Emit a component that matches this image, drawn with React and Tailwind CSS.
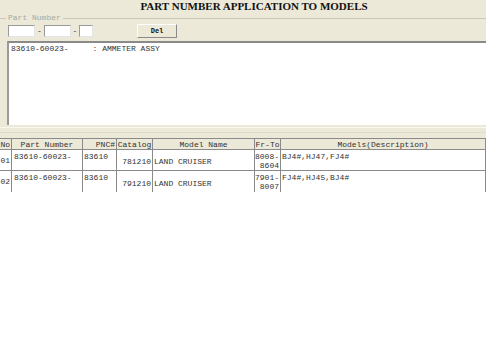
import React from 'react';

const mono = { fontFamily: '"Liberation Mono", "Courier New", monospace' };

const rows = [
  { no: '01', part: '83610-60023-', pnc: '83610', catalog: '781210', model: 'LAND CRUISER', fr: '8008-', to: '8604', desc: 'BJ4#,HJ47,FJ4#' },
  { no: '02', part: '83610-60023-', pnc: '83610', catalog: '791210', model: 'LAND CRUISER', fr: '7901-', to: '8007', desc: 'FJ4#,HJ45,BJ4#' },
];

const cols = 'grid grid-cols-[12px_71px_34px_36px_102px_26px_205px]';

const App = () => {
  return (
    <div className="w-[486px] h-[360px] bg-white overflow-hidden text-[#333]" style={mono}>
      {/* top panel */}
      <div className="bg-[#ece9d8]">
        <div className="h-[13px] flex justify-center">
          <h1
            className="text-[11px] leading-[13px] font-bold text-[#111] pl-[22px]"
            style={{ fontFamily: '"Liberation Serif", "Times New Roman", serif' }}
          >
            PART NUMBER APPLICATION TO MODELS
          </h1>
        </div>

        {/* group box caption */}
        <div className="flex items-center h-[10px]">
          <div className="w-[6px] border-t border-[#c9c6b8]" />
          <span className="px-[2px] text-[8px] leading-[10px] text-[#a8a8a0]">Part Number</span>
          <div className="flex-1 border-t border-[#c9c6b8]" />
        </div>

        {/* inputs */}
        <div className="flex items-center h-[16px] pl-[8px]">
          <div className="w-[27px] h-[12px] bg-white border border-[#9a9a9a] border-b-[#e4e4e4] border-r-[#e4e4e4]" />
          <span className="w-[9px] text-center text-[8px] leading-[12px] text-[#333]">-</span>
          <div className="w-[27px] h-[12px] bg-white border border-[#9a9a9a] border-b-[#e4e4e4] border-r-[#e4e4e4]" />
          <span className="w-[8px] text-center text-[8px] leading-[12px] text-[#333]">-</span>
          <div className="w-[14px] h-[12px] bg-white border border-[#9a9a9a] border-b-[#e4e4e4] border-r-[#e4e4e4]" />
          <button className="ml-[44px] w-[40px] h-[14px] bg-[#ece9d8] border border-white border-b-[#8a8a8a] border-r-[#8a8a8a] text-[7px] font-bold text-[#111] leading-[12px]">
            Del
          </button>
        </div>

        {/* text area */}
        <div className="ml-[7px] mt-[2px] h-[84px] bg-white border-l-2 border-t-2 border-l-[#9a9a9a] border-t-[#8a8a8a] px-[2px] pt-[1px]">
          <pre className="text-[8px] leading-[9px] text-[#333]" style={mono}>83610-60023-     : AMMETER ASSY</pre>
        </div>

        {/* splitter band */}
        <div className="h-[13px] flex flex-col">
          <div className="h-[2px]" />
          <div className="border-t border-[#f8f7f0]" />
          <div className="h-[4px]" />
          <div className="border-t border-[#dedbcc]" />
        </div>
      </div>

      {/* table */}
      <div className="border-t border-[#8a8a8a]">
        <div className={`${cols} h-[11px] bg-[#ece9d8] text-[8px] leading-[11px] text-[#333] border-b border-[#8a8a8a]`}>
          <div className="border-r border-[#8a8a8a] text-right pr-[1px]">No</div>
          <div className="border-r border-[#8a8a8a] text-center">Part Number</div>
          <div className="border-r border-[#8a8a8a] text-right pr-[1px]">PNC#</div>
          <div className="border-r border-[#8a8a8a] text-center">Catalog</div>
          <div className="border-r border-[#8a8a8a] text-center">Model Name</div>
          <div className="border-r border-[#8a8a8a] text-center">Fr-To</div>
          <div className="border-r border-[#8a8a8a] text-center">Models(Description)</div>
        </div>
        {rows.map((r, i) => (
          <div
            key={r.no}
            className={`${cols} h-[21px] text-[8px] leading-[9px] text-[#333] ${i === 0 ? 'border-b border-[#8a8a8a]' : ''}`}
          >
            <div className="border-r border-[#8a8a8a] flex items-center justify-end pr-[1px]">{r.no}</div>
            <div className="border-r border-[#8a8a8a] pl-[2px] pt-[2px]">{r.part}</div>
            <div className="border-r border-[#8a8a8a] pl-[1px] pt-[2px]">{r.pnc}</div>
            <div className="border-r border-[#8a8a8a] flex items-center justify-end pr-[1px] pt-[3px]">{r.catalog}</div>
            <div className="border-r border-[#8a8a8a] flex items-center pl-[1px] pt-[3px]">{r.model}</div>
            <div className="border-r border-[#8a8a8a] flex flex-col items-end pr-[1px] pt-[2px]">
              <span>{r.fr}</span>
              <span>{r.to}</span>
            </div>
            <div className="border-r border-[#8a8a8a] pl-[1px] pt-[2px]">{r.desc}</div>
          </div>
        ))}
      </div>
    </div>
  );
};

export default App;
